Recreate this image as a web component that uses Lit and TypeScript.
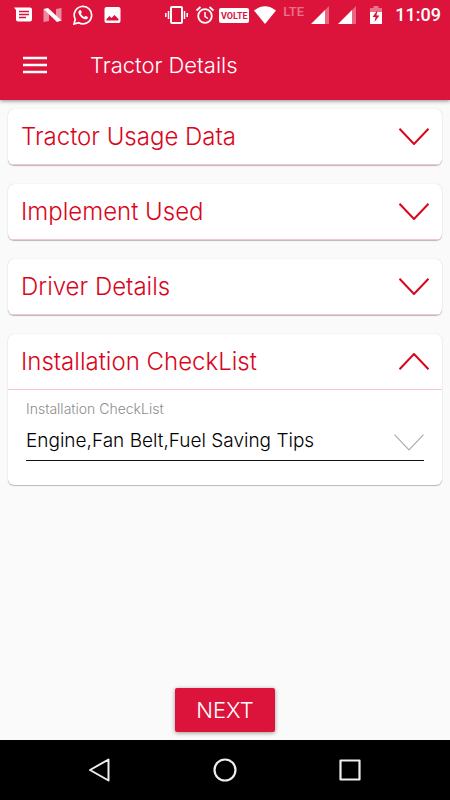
import { LitElement, html, svg, css, nothing } from "lit";
import { customElement, property, state } from "lit/decorators.js";

const chevron = (open: boolean) => html`<svg width="30" height="17" viewBox="0 0 30 17" fill="none" aria-hidden="true">
  ${open
    ? svg`<path d="M0.5 16.3L15 1L29.5 16.3" stroke="currentColor" stroke-width="var(--chevron-stroke, 2)"/>`
    : svg`<path d="M0.5 0.7L15 16L29.5 0.7" stroke="currentColor" stroke-width="var(--chevron-stroke, 2)"/>`}
</svg>`;

@customElement("status-bar")
class StatusBar extends LitElement {
  static styles = css`
    :host { display: flex; justify-content: space-between; height: 30px; padding: 0 9px 0 14px; color: #fff; }
    .group { display: flex; align-items: center; }
    .left { gap: 11px; }
    .right { gap: 5px; }
    svg { display: block; flex: none; }
    .volte { width: 30px; height: 15px; border-radius: 2px; background: #fff; color: #dc143c; font: 700 9px/16px Roboto, sans-serif; text-align: center; }
    .lte { width: 24px; height: 24px; box-sizing: border-box; padding-left: 2px; font: 500 13px/18px Roboto, sans-serif; opacity: .4; }
    .time { font: 500 18px/30px Roboto, sans-serif; }
  `;

  signal(width: number, x: number) {
    return html`<svg width=${width} height="22" viewBox="0 0 ${width} 22" aria-hidden="true">
      <path d="M${x + 14} 20V6L${x + 18} 2V20Z" fill="#fff" opacity=".35"/>
      <path d="M${x} 20L${x + 14} 6V20Z" fill="#fff"/>
    </svg>`;
  }

  render() {
    return html`
      <div class="group left">
        <svg width="18" height="16" viewBox="0 0 18 16" aria-hidden="true">
          <path d="M0 .5H16A2 2 0 0 1 18 2.500V12.500A2 2 0 0 1 16 14.500H4A2 2 0 0 1 2 12.500V3Z" fill="#fff"/>
          <path d="M5 4.500H15M5 7.500H15M5 10.500H12" stroke="#dc143c" stroke-width="1.400"/>
        </svg>
        <svg width="19" height="16" viewBox="0 0 19 16" aria-hidden="true">
          <path d="M.5 2L6 7V14L.5 15ZM18.500 1V14L13 9V2Z" fill="#fff" opacity=".5"/>
          <path d="M.5 2L5 1L18.500 13.500L14 15Z" fill="#fff"/>
        </svg>
        <svg width="20" height="20" viewBox="0 0 20 20" fill="none" aria-hidden="true">
          <path d="M1 19L2.300 14.300A8.700 8.700 0 1 1 5.700 17.700Z" stroke="#fff" stroke-width="1.700"/>
          <path d="M6.500 5.300C7.200 4.700 7.800 5 8.100 5.700L8.700 7.200C8.900 7.800 8.300 8.300 7.900 8.800C8.800 10.400 9.900 11.300 11.400 12C11.900 11.500 12.300 10.700 12.900 11L14.700 11.900C15.300 12.200 14.900 13.300 14.300 13.800C12.800 15 10.300 14 8.500 12.500C6.500 10.800 5.200 8.500 5.400 7.100C5.500 6.400 5.900 5.700 6.500 5.300Z" fill="#fff"/>
        </svg>
        <svg width="18" height="18" viewBox="0 0 18 18" aria-hidden="true">
          <rect x=".5" y="1" width="16" height="16" rx="2" fill="#fff"/>
          <path d="M2.500 14.500V13L5.500 10L7.500 12L10.500 9L14.500 13V14.500Z" fill="#dc143c"/>
        </svg>
      </div>
      <div class="group right">
        <svg width="26" height="18" viewBox="0 0 26 18" fill="none" stroke="#fff" aria-hidden="true">
          <rect x="8" y="1" width="11" height="16" rx="1" stroke-width="2"/>
          <path d="M2.800 7V11M5.500 5V13M21.500 5V13M24.200 7V11" stroke-width="1.500"/>
        </svg>
        <svg width="20" height="18" viewBox="0 0 20 18" fill="none" stroke="#fff" aria-hidden="true">
          <circle cx="11" cy="10" r="6.800" stroke-width="1.800"/>
          <path d="M11 6V10.500L14 12.500" stroke-width="1.500"/>
          <path d="M2.500 4.500L6.500 1M19.500 4.500L15.500 1" stroke-width="1.800"/>
        </svg>
        <span class="volte">VOLTE</span>
        <svg width="22" height="18" viewBox="0 0 22 18" aria-hidden="true"><path d="M0 4.500Q11 -4 22 4.500L11 18Z" fill="#fff"/></svg>
        <span class="lte">LTE</span>
        ${this.signal(20, 1)}
        ${this.signal(22, 3)}
        <svg width="28" height="18" viewBox="0 0 28 18" aria-hidden="true">
          <path d="M8 2H11.500V0H16.500V2H20V6H8Z" fill="#fff" opacity=".4"/>
          <rect x="8" y="6" width="12" height="12" fill="#fff"/>
          <path d="M15.500 4L10.500 11H13.500L12.500 16L17.500 9.500H14.500Z" fill="#dc143c"/>
        </svg>
        <span class="time">11:09</span>
      </div>`;
  }
}

@customElement("accordion-card")
class AccordionCard extends LitElement {
  @property() heading = "";
  @property({ type: Boolean, reflect: true }) open = false;

  static styles = css`
    :host { display: block; background: #fff; border-radius: 6px; overflow: hidden; box-shadow: 0 1px 1px rgba(0, 0, 0, .25), 0 0 1px rgba(0, 0, 0, .2); }
    .header { display: flex; align-items: center; justify-content: space-between; width: 100%; height: 56px; padding: 0 13px; border: 0; border-bottom: 1px solid #f8c4cc; background: none; color: #d9061c; font: 300 24px/28px Inter, sans-serif; text-align: left; cursor: pointer; }
    h2 { margin: 0; font: inherit; }
    .body { padding: 11px 18px 24px; }
  `;

  render() {
    return html`
      <h2>
        <button class="header" aria-expanded=${this.open ? "true" : "false"} @click=${() => (this.open = !this.open)}>
          <span>${this.heading}</span>${chevron(this.open)}
        </button>
      </h2>
      ${this.open ? html`<div class="body"><slot></slot></div>` : nothing}`;
  }
}

@customElement("app-root")
class AppRoot extends LitElement {
  @state() private cards = ["Tractor Usage Data", "Implement Used", "Driver Details"];

  static styles = css`
    :host { display: flex; flex-direction: column; min-height: 100vh; background: #fafafa; font-family: Inter, sans-serif; }
    .top { background: #dc143c; box-shadow: 0 1px 4px rgba(0, 0, 0, .45); }
    .bar { display: flex; align-items: center; gap: 42px; height: 70px; padding: 0 22px; color: #fff; }
    .bar h1 { margin: 0; font: 300 22px/28px Inter, sans-serif; }
    button { cursor: pointer; }
    .menu { display: block; padding: 0; border: 0; background: none; color: inherit; }
    svg { display: block; }
    main { flex: 1; display: flex; flex-direction: column; gap: 19px; padding: 9px 8px; }
    .label { display: block; color: #8c8c8c; font-size: 14px; font-weight: 300; line-height: 16px; }
    .field { display: grid; align-items: center; margin-top: 12px; border-bottom: 1px solid #111; color: #a9a9a9; --chevron-stroke: 1.1; }
    .field > * { grid-area: 1 / 1; }
    .field svg { justify-self: end; align-self: start; margin-top: 5px; pointer-events: none; }
    select { appearance: none; width: 100%; height: 31px; padding: 0 34px 8px 0; border: 0; background: none; color: #000; font: 300 19px/23px Inter, sans-serif; }
    footer { display: flex; justify-content: center; padding-bottom: 8px; }
    .next { width: 100px; height: 44px; padding: 0; border: 0; border-radius: 2px; background: #dc143c; color: #fff; font: 300 22px/28px Inter, sans-serif; box-shadow: 0 1px 4px rgba(0, 0, 0, .4); }
    nav { display: flex; justify-content: space-around; align-items: center; height: 60px; padding: 0 38px; background: #000; }
    nav button { padding: 0; border: 0; background: none; }
  `;

  render() {
    return html`
      <header class="top">
        <status-bar></status-bar>
        <div class="bar">
          <button class="menu" aria-label="Menu">
            <svg width="26" height="18" viewBox="0 0 26 18"><path d="M1 2H25M1 9H25M1 16H25" stroke="#fff" stroke-width="2.600"/></svg>
          </button>
          <h1>Tractor Details</h1>
        </div>
      </header>
      <main>
        ${this.cards.map((c) => html`<accordion-card heading=${c}></accordion-card>`)}
        <accordion-card heading="Installation CheckList" open>
          <label class="label" for="checklist">Installation CheckList</label>
          <div class="field">
            <select id="checklist"><option>Engine,Fan Belt,Fuel Saving Tips</option></select>
            ${chevron(false)}
          </div>
        </accordion-card>
      </main>
      <footer><button class="next">NEXT</button></footer>
      <nav aria-label="System">
        <button aria-label="Back"><svg width="24" height="24" viewBox="0 0 24 24" fill="none" stroke="#eee" stroke-width="2" stroke-linejoin="round"><path d="M20.500 1.500V22.500L2 12Z"/></svg></button>
        <button aria-label="Home"><svg width="24" height="24" viewBox="0 0 24 24" fill="none" stroke="#eee" stroke-width="2.200"><circle cx="12" cy="12" r="10.500"/></svg></button>
        <button aria-label="Recent apps"><svg width="24" height="24" viewBox="0 0 24 24" fill="none" stroke="#eee" stroke-width="2.200" stroke-linejoin="round"><rect x="2.500" y="2.500" width="19" height="19"/></svg></button>
      </nav>`;
  }
}
